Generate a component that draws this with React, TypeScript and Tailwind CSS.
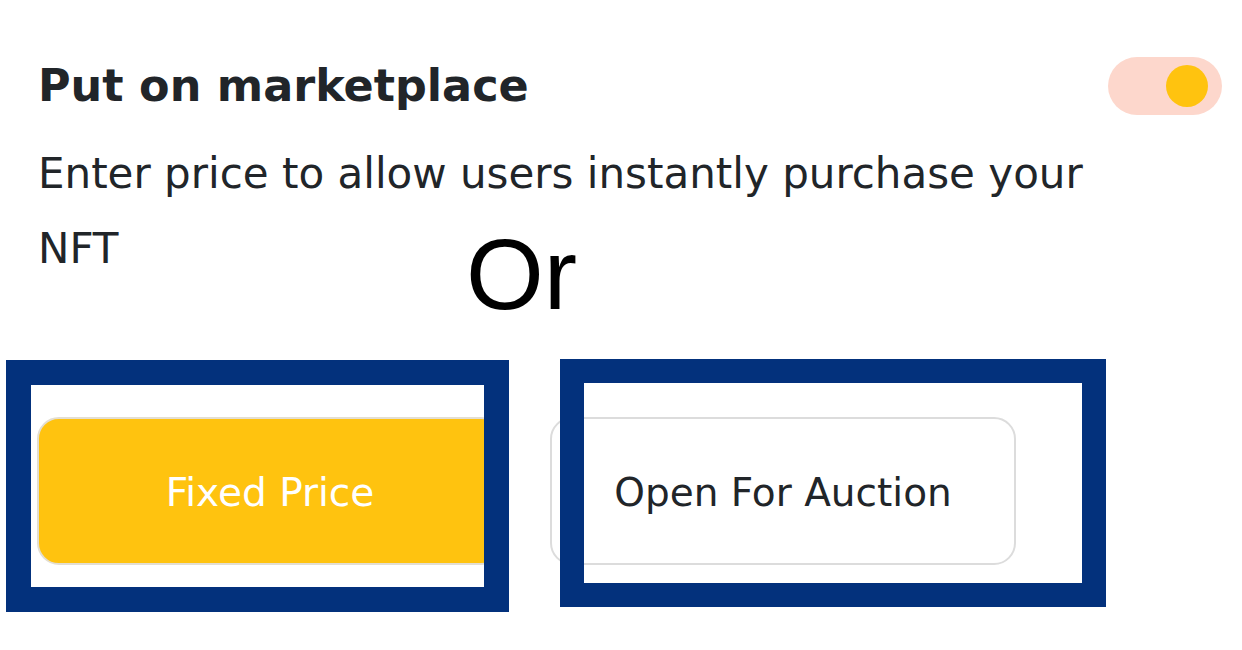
import React from "react";

export default function App() {
  return (
    <div
      className="relative w-[1242px] h-[650px] bg-white overflow-hidden text-[#212529]"
      style={{ fontFamily: '"DejaVu Sans", Verdana, sans-serif' }}
    >
      <div className="flex flex-col pl-[38px] pr-[20px] pt-[57px]">
        {/* Header row */}
        <div className="flex items-center justify-between">
          <h2 className="text-[44.5px] leading-[58px] font-bold">Put on marketplace</h2>
          <button
            type="button"
            aria-pressed="true"
            className="flex items-center justify-end w-[114px] h-[58px] rounded-full bg-[#FDD7CC] pr-[14px]"
          >
            <span className="block w-[42px] h-[42px] rounded-full bg-[#FFC30F]" />
          </button>
        </div>

        {/* Description */}
        <p className="mt-[21px] w-[1090px] text-[42px] leading-[75px]">
          Enter price to allow users instantly purchase your NFT
        </p>

        {/* Buttons */}
        <div className="flex gap-[47px] mt-[131px] -ml-[1px]">
          <button
            type="button"
            className="flex items-center justify-center w-[466px] h-[148px] pt-[4px] rounded-[22px] border-2 border-[#E3DED2] bg-[#FFC30F] text-white text-[39px]"
          >
            Fixed Price
          </button>
          <button
            type="button"
            className="flex items-center justify-center w-[466px] h-[148px] pt-[4px] rounded-[22px] border-2 border-[#DCDCDC] bg-white text-[#212529] text-[39px]"
          >
            Open For Auction
          </button>
        </div>
      </div>

      {/* Annotation overlays */}
      <div
        className="absolute left-[466px] top-[224px] text-[100px] leading-none text-black"
        style={{ fontFamily: '"Liberation Sans", Arial, sans-serif' }}
      >
        Or
      </div>
      <div className="absolute left-[6px] top-[360px] w-[503px] h-[252px] border-[25px] border-[#03317C]" />
      <div className="absolute left-[560px] top-[359px] w-[546px] h-[248px] border-[24px] border-[#03317C]" />
    </div>
  );
}
